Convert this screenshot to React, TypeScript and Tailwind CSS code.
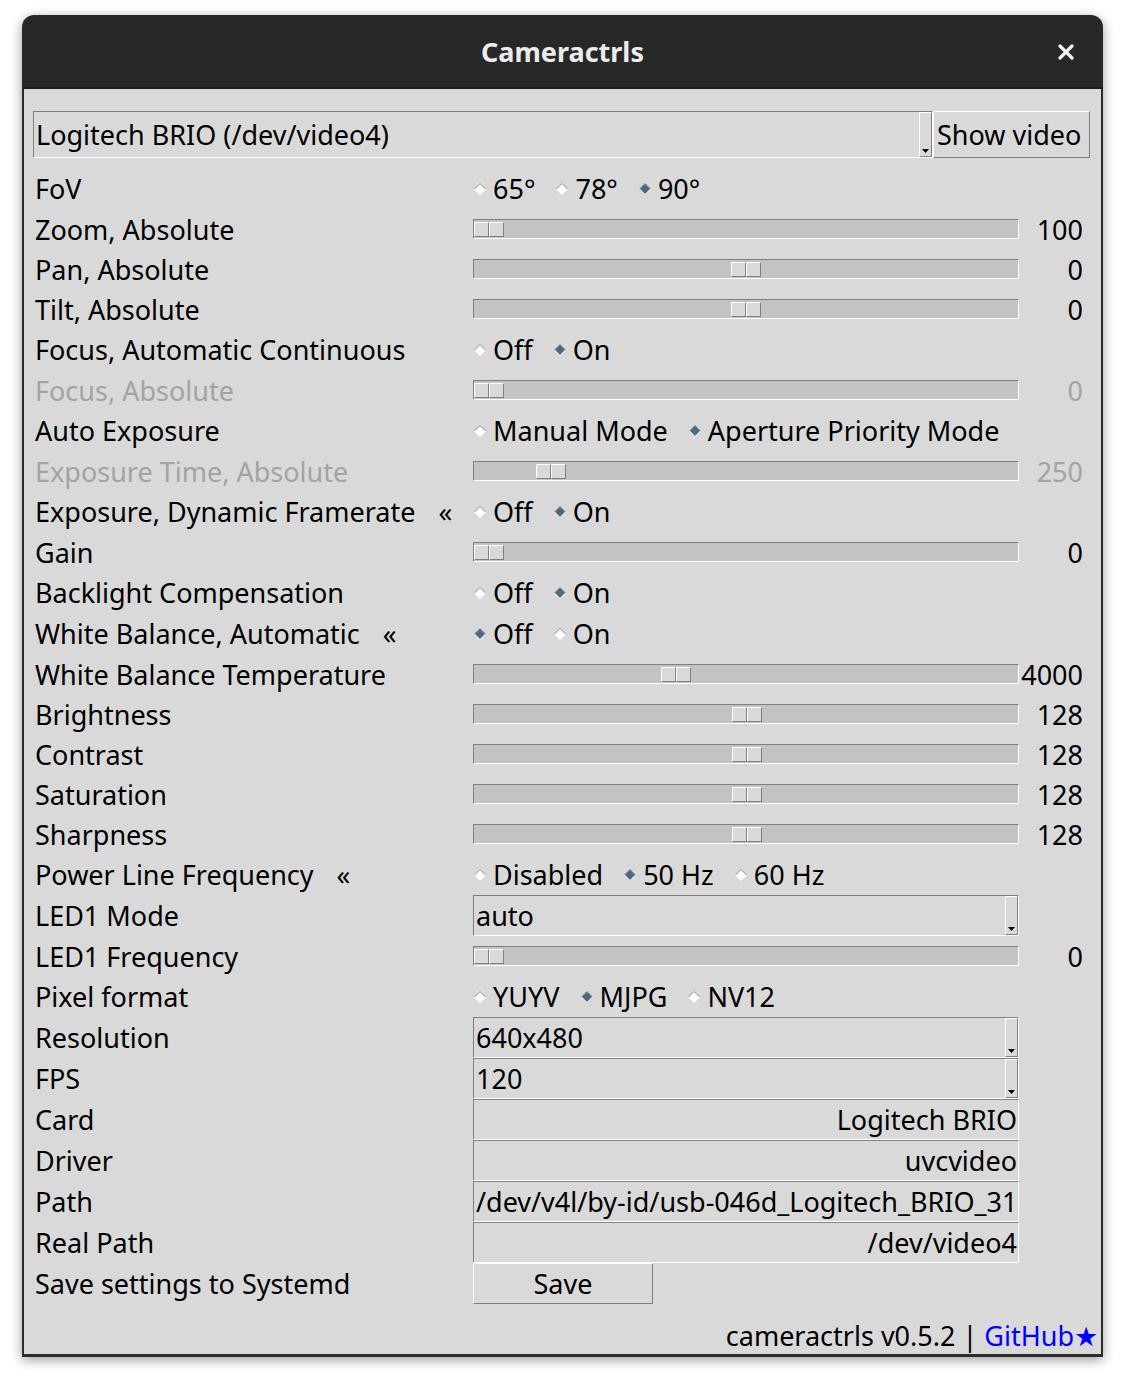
import React from "react";

type Row =
  | { label: string; kind: "radio"; options: string[]; selected: number; mark?: boolean }
  | { label: string; kind: "slider"; pos: number; value: string; disabled?: boolean }
  | { label: string; kind: "combo"; value: string }
  | { label: string; kind: "entry"; value: string; left?: boolean }
  | { label: string; kind: "button"; value: string };

const rows: Row[] = [
  { label: "FoV", kind: "radio", options: ["65°", "78°", "90°"], selected: 2 },
  { label: "Zoom, Absolute", kind: "slider", pos: 0, value: "100" },
  { label: "Pan, Absolute", kind: "slider", pos: 0.5, value: "0" },
  { label: "Tilt, Absolute", kind: "slider", pos: 0.5, value: "0" },
  { label: "Focus, Automatic Continuous", kind: "radio", options: ["Off", "On"], selected: 1 },
  { label: "Focus, Absolute", kind: "slider", pos: 0, value: "0", disabled: true },
  { label: "Auto Exposure", kind: "radio", options: ["Manual Mode", "Aperture Priority Mode"], selected: 1 },
  { label: "Exposure Time, Absolute", kind: "slider", pos: 0.12, value: "250", disabled: true },
  { label: "Exposure, Dynamic Framerate", kind: "radio", options: ["Off", "On"], selected: 1, mark: true },
  { label: "Gain", kind: "slider", pos: 0, value: "0" },
  { label: "Backlight Compensation", kind: "radio", options: ["Off", "On"], selected: 1 },
  { label: "White Balance, Automatic", kind: "radio", options: ["Off", "On"], selected: 0, mark: true },
  { label: "White Balance Temperature", kind: "slider", pos: 0.364, value: "4000" },
  { label: "Brightness", kind: "slider", pos: 0.502, value: "128" },
  { label: "Contrast", kind: "slider", pos: 0.502, value: "128" },
  { label: "Saturation", kind: "slider", pos: 0.502, value: "128" },
  { label: "Sharpness", kind: "slider", pos: 0.502, value: "128" },
  { label: "Power Line Frequency", kind: "radio", options: ["Disabled", "50 Hz", "60 Hz"], selected: 1, mark: true },
  { label: "LED1 Mode", kind: "combo", value: "auto" },
  { label: "LED1 Frequency", kind: "slider", pos: 0, value: "0" },
  { label: "Pixel format", kind: "radio", options: ["YUYV", "MJPG", "NV12"], selected: 1 },
  { label: "Resolution", kind: "combo", value: "640x480" },
  { label: "FPS", kind: "combo", value: "120" },
  { label: "Card", kind: "entry", value: "Logitech BRIO" },
  { label: "Driver", kind: "entry", value: "uvcvideo" },
  { label: "Path", kind: "entry", value: "/dev/v4l/by-id/usb-046d_Logitech_BRIO_31", left: true },
  { label: "Real Path", kind: "entry", value: "/dev/video4" },
  { label: "Save settings to Systemd", kind: "button", value: "Save" },
];

const sunken = "border border-t-[#808080] border-l-[#808080] border-b-white border-r-white";
const raised = "border border-t-white border-l-white border-b-[#808080] border-r-[#808080]";

function Diamond({ on }: { on: boolean }) {
  return (
    <svg width="12" height="12" viewBox="0 0 12 12" className="shrink-0">
      <polygon points="6,0.5 11.5,6 6,11.5 0.5,6" fill={on ? "#4a6984" : "#ffffff"} />
      <polyline points="0.5,6 6,0.5 11.5,6" fill="none" stroke="#8c8c8c" strokeWidth="1" />
      <polyline points="0.5,6 6,11.5 11.5,6" fill="none" stroke="#ffffff" strokeWidth="1" />
    </svg>
  );
}

function Combo({ value, tall }: { value: string; tall?: boolean }) {
  return (
    <div className={`flex ${tall ? "h-[47px]" : "h-[41px]"} flex-1 ${sunken}`}>
      <span className="flex-1 pl-[2px] flex items-center">{value}</span>
      <div className={`w-[13px] flex flex-col justify-end items-center pb-[3px] ${raised}`}>
        <svg width="7" height="4" viewBox="0 0 7 4">
          <polygon points="0,0 7,0 3.5,4" fill="#000" />
        </svg>
      </div>
    </div>
  );
}

function Slider({ pos }: { pos: number }) {
  return (
    <div className={`relative h-[20px] w-full bg-[#c3c3c3] ${sunken}`}>
      <div
        className="absolute top-[2px] h-[15px] w-[30px] flex"
        style={{ left: `calc(${pos} * (100% - 30px))` }}
      >
        <div className={`flex-1 bg-[#d9d9d9] ${raised}`} />
        <div className={`flex-1 bg-[#d9d9d9] ${raised}`} />
      </div>
    </div>
  );
}

function Control({ row }: { row: Row }) {
  if (row.kind === "radio") {
    return (
      <div className="flex items-center gap-[21px] pl-[1px]">
        {row.options.map((o, i) => (
          <div key={o} className="flex items-center gap-[7px]">
            <Diamond on={i === row.selected} />
            <span>{o}</span>
          </div>
        ))}
      </div>
    );
  }
  if (row.kind === "slider") return <Slider pos={row.pos} />;
  if (row.kind === "combo") return <Combo value={row.value} />;
  if (row.kind === "entry") {
    return (
      <div className={`h-[41px] w-full overflow-hidden whitespace-nowrap flex items-center ${row.left ? "justify-start pl-[2px]" : "justify-end pr-[1px]"} ${sunken}`}>
        {row.value}
      </div>
    );
  }
  return (
    <div className={`h-[41px] w-[180px] flex items-center justify-center ${raised}`}>{row.value}</div>
  );
}

const App = () => {
  return (
    <div className="min-h-[1384px] bg-white pt-[15px] pl-[22px]" style={{ fontFamily: '"Noto Sans", sans-serif' }}>
      <div className="w-[1081px] rounded-t-[12px] shadow-[0_3px_12px_rgba(0,0,0,0.4)] text-[27px] leading-[37px] text-black">
        {/* Title bar */}
        <div className="relative h-[74px] rounded-t-[12px] bg-[#282828] border-b-2 border-[#1c1c1c] flex items-center justify-center">
          <span className="text-[#ececec] font-bold text-[27px]">Cameractrls</span>
          <svg className="absolute right-[29px] top-[29px]" width="16" height="16" viewBox="0 0 16 16">
            <path d="M2 2 L14 14 M14 2 L2 14" stroke="#f2f2f2" strokeWidth="3.2" strokeLinecap="round" />
          </svg>
        </div>

        {/* Body */}
        <div className="bg-[#d9d9d9] border-x-2 border-b-[3px] border-[#2b2b2b] pl-[9px] pr-[11px] pt-[22px]">
          <div className="flex">
            <Combo value="Logitech BRIO (/dev/video4)" tall />
            <div className={`h-[47px] w-[157px] flex items-center pl-[3px] ${raised}`}>Show video</div>
          </div>

          <div className="mt-[10px] grid grid-cols-[440px_546px_64px]">
            {rows.map((row) => {
              const h = row.kind === "slider" ? "h-[40px]" : "h-[41px]";
              const dim = row.kind === "slider" && row.disabled;
              return (
                <React.Fragment key={row.label}>
                  <div className={`${h} pl-[2px] flex items-center whitespace-nowrap ${dim ? "text-[#a3a3a3]" : ""}`}>
                    {row.label}
                    {row.kind === "radio" && row.mark && <span className="ml-[23px]">«</span>}
                  </div>
                  <div className={`${h} flex items-center`}>
                    <Control row={row} />
                  </div>
                  <div className={`${h} flex items-center justify-end whitespace-nowrap ${dim ? "text-[#a3a3a3]" : ""}`}>
                    {row.kind === "slider" ? row.value : ""}
                  </div>
                </React.Fragment>
              );
            })}
          </div>

          <div className="mt-[13px] h-[37px] flex justify-end -mr-[8px] whitespace-nowrap">
            <span>cameractrls v0.5.2 | </span>
            <span className="text-[#0000ff] ml-[7px]">GitHub★</span>
          </div>
        </div>
      </div>
    </div>
  );
};

export default App;
